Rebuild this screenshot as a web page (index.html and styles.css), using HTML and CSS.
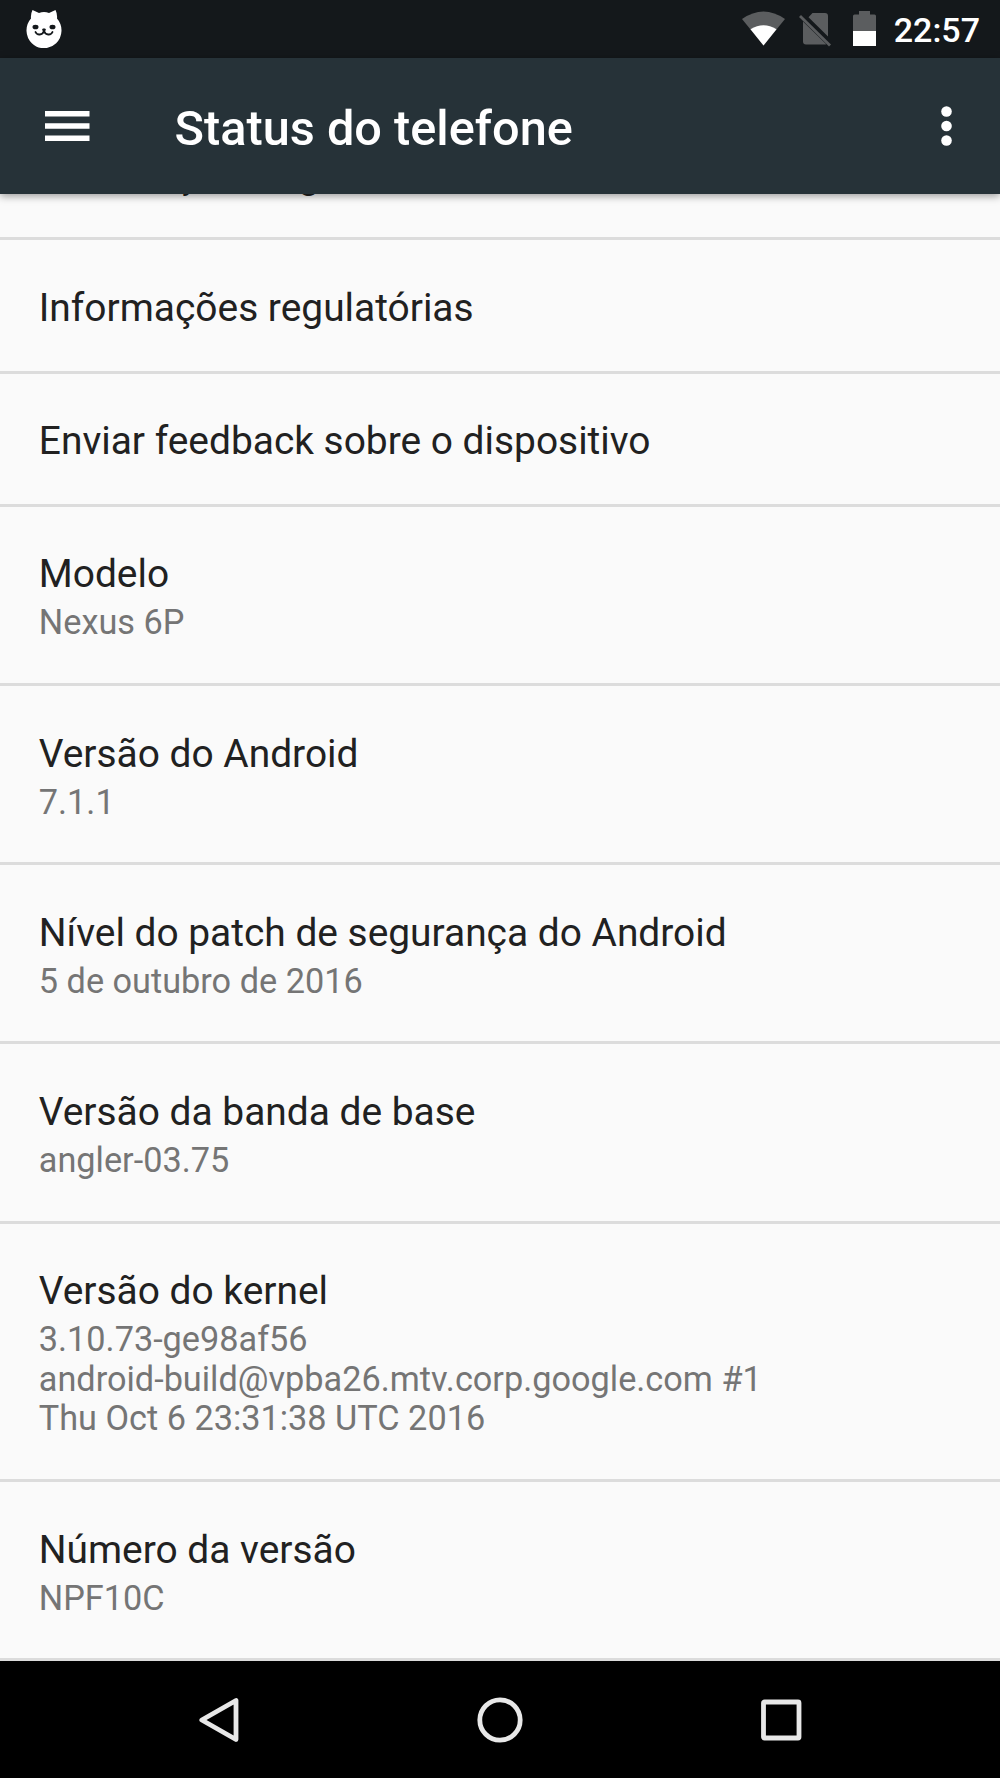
FILE: index.html
```html
<!DOCTYPE html>
<html lang="pt-BR">
<head>
<meta charset="utf-8">
<title>Status do telefone</title>
<link rel="stylesheet" href="styles.css">
</head>
<body>
<div class="screen">
  <header class="status-bar">
    <svg class="cat" viewBox="0 0 36 38"><path fill="#fff" d="M6.500 0 13 3Q18 1.200 23 3L29.500 0Q31.500 4 31 8.500A17.500 17.800 0 1 1 5 8.500Q4.500 4 6.500 0Z"/><g fill="#14181b"><ellipse cx="9.500" cy="17" rx="3" ry="2.300"/><ellipse cx="26.500" cy="17" rx="3" ry="2.300"/><ellipse cx="18" cy="19.800" rx="1.900" ry="1.400"/></g><path d="M9.500 22C11 25.500 16.500 25.500 18 21C19.500 25.500 25 25.500 26.500 22" fill="none" stroke="#14181b" stroke-width="1.900" stroke-linecap="round"/></svg>
    <div class="indicators">
      <svg class="wifi" viewBox="0 0 43 35"><path fill="#5b5d5f" d="M0 8Q21.500-7 43 8L21.500 34.500Z"/><path fill="#fff" d="M8.500 18.300Q21.500 10 34.500 18.300L21.500 34.500Z"/></svg>
      <svg class="sim" viewBox="0 0 32 36"><path fill="#5b5d5f" d="M13.500 2H26Q29 2 29 5V25.500L9.500 6.200ZM4 10.500 27.300 33.200Q26.500 33.500 25.500 33.500H7Q4 33.500 4 30.500Z"/><path d="M1 5 31 34.500" stroke="#5b5d5f" stroke-width="2.800"/></svg>
      <svg class="battery" viewBox="0 0 23 35"><path fill="#5b5d5f" d="M6 0H17V3.500H21.500Q23 3.500 23 5V20H0V5Q0 3.500 1.500 3.500H6Z"/><path fill="#fff" d="M0 20H23V35H0Z"/></svg>
      <span class="clock">22:57</span>
    </div>
  </header>
  <div class="app-bar">
    <svg class="menu" viewBox="0 0 45 30"><path fill="#fff" d="M0 0H44.500V5.500H0ZM0 12.250H44.500V17.750H0ZM0 24.500H44.500V30H0Z"/></svg>
    <h1 class="title">Status do telefone</h1>
    <svg class="more" viewBox="0 0 11 40"><g fill="#fff"><circle cx="5.500" cy="5.500" r="5.300"/><circle cx="5.500" cy="20" r="5.300"/><circle cx="5.500" cy="34.500" r="5.300"/></g></svg>
  </div>
  <main class="list">
    <div class="item partial"><div class="name">Informações legais</div></div>
    <div class="item"><div class="name">Informações regulatórias</div></div>
    <div class="item"><div class="name">Enviar feedback sobre o dispositivo</div></div>
    <div class="item"><div class="name">Modelo</div><div class="value">Nexus 6P</div></div>
    <div class="item"><div class="name">Versão do Android</div><div class="value">7.1.1</div></div>
    <div class="item"><div class="name">Nível do patch de segurança do Android</div><div class="value">5 de outubro de 2016</div></div>
    <div class="item"><div class="name">Versão da banda de base</div><div class="value">angler-03.75</div></div>
    <div class="item"><div class="name">Versão do kernel</div><div class="value">3.10.73-ge98af56<br>android-build@vpba26.mtv.corp.google.com #1<br>Thu Oct 6 23:31:38 UTC 2016</div></div>
    <div class="item"><div class="name">Número da versão</div><div class="value">NPF10C</div></div>
  </main>
  <nav class="nav-bar">
    <svg class="back" viewBox="0 0 40 46"><path d="M37 3.500V42.500L2.800 23Z"/></svg>
    <svg class="home" viewBox="0 0 46 46"><circle cx="23" cy="23" r="20.200"/></svg>
    <svg class="recent" viewBox="0 0 42 42"><rect x="3.500" y="3" width="35.500" height="36" rx="1"/></svg>
  </nav>
</div>
</body>
</html>
```
FILE: styles.css
```css
*{box-sizing:border-box}
body{margin:0;font-family:Roboto,sans-serif}
svg{display:block;flex:none}
.screen{width:1000px;height:1778px;display:flex;flex-direction:column;overflow:hidden;background:#fafafa}
.status-bar{height:58px;flex:none;background:#14181b;display:flex;align-items:flex-start;justify-content:space-between;padding:10px 20px 0 25.500px}
.cat{width:36px;height:38px}
.indicators{display:flex;align-items:flex-start}
.wifi{width:43px;height:35px;margin:1px 14px 0 0}
.sim{width:32px;height:36px;margin:1px 22px 0 0}
.battery{width:23px;height:35px;margin:1px 18px 0 0}
.clock{color:#fff;font-size:34px;line-height:38px;font-weight:500;margin-top:1px}
.app-bar{height:136px;flex:none;background:#263238;display:flex;align-items:center;padding:0 48px 0 45px;z-index:1;box-shadow:0 2px 8px rgba(0,0,0,.4)}
.menu{width:45px;height:30px}
.title{margin:5px auto 0 84.500px;color:#fff;font-size:48.700px;line-height:56px;font-weight:500}
.more{width:11px;height:40px}
.list{flex:1;min-height:0;overflow:hidden;background:#fafafa}
.item{min-height:133.300px;padding:45.600px 38.800px 40px;border-bottom:3px solid #dcdcdc}
.partial{margin-top:-87px}
.name{color:#212121;font-size:38.900px;line-height:44px;white-space:nowrap}
.value{color:#757575;font-size:34.280px;line-height:39.600px;margin-top:7px;white-space:nowrap}
.nav-bar{height:117px;flex:none;background:#000;display:flex;align-items:center;padding-left:199px}
.nav-bar svg{fill:none;stroke:#e8e8e8;stroke-width:4.800;stroke-linejoin:round}
.back{width:40px;height:46px}
.home{width:46px;height:46px;margin:0 237px 0 238px}
.recent{width:42px;height:42px}
```
